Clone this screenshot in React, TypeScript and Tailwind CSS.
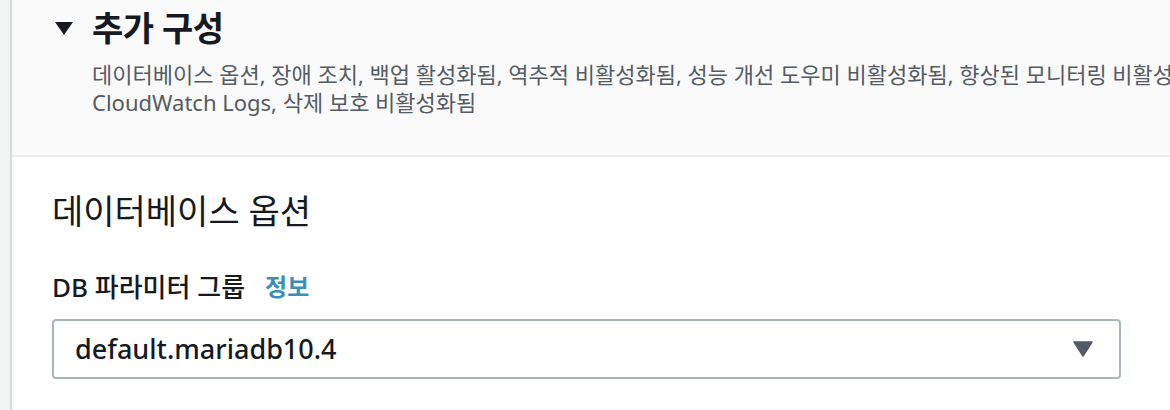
import React from 'react';

const FONT = { fontFamily: '"Noto Sans", "Noto Sans CJK KR", sans-serif' };

const App: React.FC = () => {
  return (
    <div className="flex w-[1170px] h-[410px] overflow-hidden bg-white text-[#16191f]" style={FONT}>
      <div className="w-[12px] shrink-0 bg-[#f2f3f3] border-r-2 border-[#d5dbdb]" />
      <div className="flex-1 flex flex-col min-w-0">
        <div className="h-[157px] shrink-0 bg-[#fafafa] border-b-2 border-[#eaeded] pl-[43px] pt-[6px] overflow-hidden">
          <div className="flex items-center">
            <svg width="18" height="14" viewBox="0 0 18 14" className="mr-[19px] mt-[2px]">
              <path d="M0 0 H18 L9 13 Z" fill="#16191f" />
            </svg>
            <h2 className="text-[34px] font-bold leading-[44px] tracking-[-0.5px]">추가 구성</h2>
          </div>
          <p className="ml-[37px] mt-[10px] text-[22px] leading-[28px] text-[#545b64] whitespace-nowrap">
            데이터베이스 옵션, 장애 조치, 백업 활성화됨, 역추적 비활성화됨, 성능 개선 도우미 비활성화됨, 향상된 모니터링 비활성화됨,
            <br />
            CloudWatch Logs, 삭제 보호 비활성화됨
          </p>
        </div>
        <div className="pl-[40px] pr-[49px] pt-[32px]">
          <h3 className="text-[34px] leading-[44px] font-normal">데이터베이스 옵션</h3>
          <div className="mt-[38px] flex items-center h-[32px]">
            <span className="text-[26px] font-medium">DB 파라미터 그룹</span>
            <a className="ml-[20px] text-[24px] font-bold text-[#3a8fb7]">정보</a>
          </div>
          <div className="mt-[16px] h-[60px] rounded-[4px] border-2 border-[#aab7b8] flex items-center justify-between pl-[21px] pr-[26px]">
            <span className="text-[27px] font-medium">default.mariadb10.4</span>
            <svg width="20" height="16" viewBox="0 0 20 16">
              <path d="M1 1 H19 L10 15 Z" fill="#545b64" stroke="#545b64" strokeWidth="1.5" strokeLinejoin="round" />
            </svg>
          </div>
        </div>
      </div>
    </div>
  );
};

export default App;
